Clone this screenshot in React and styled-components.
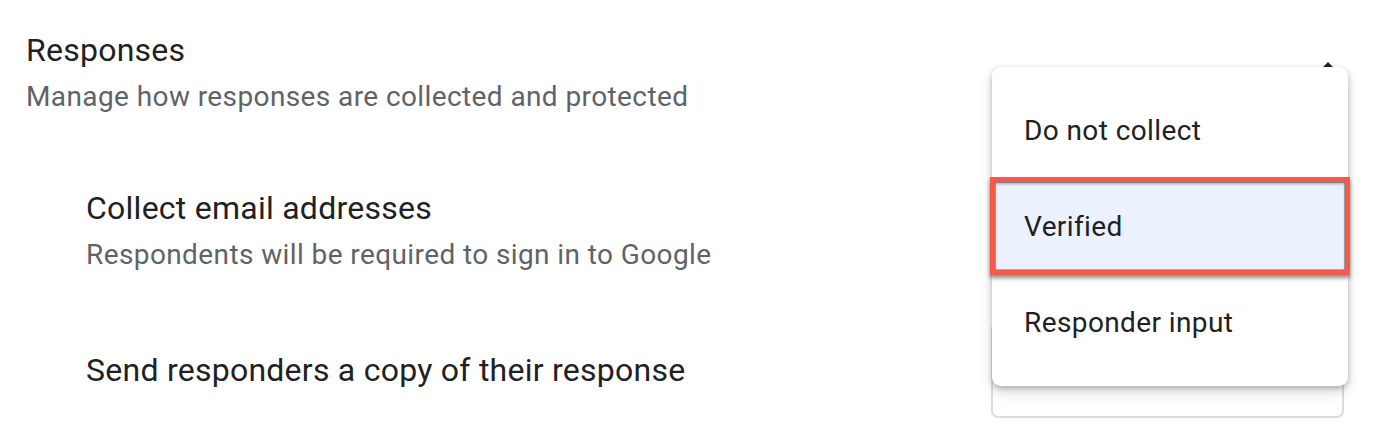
import React from "react";
import styled, { createGlobalStyle } from "styled-components";

const Global = createGlobalStyle`
  html, body { margin: 0; padding: 0; background: #fff; }
  body { font-family: Roboto, "Noto Sans", Arial, sans-serif; color: #202124; }
  * { box-sizing: border-box; }
`;

const Page = styled.div`
  width: 1374px;
  height: 440px;
  overflow: hidden;
  padding: 30px 30px 0 26px;
  display: flex;
  flex-direction: column;
`;

const Header = styled.div`
  display: flex;
  justify-content: space-between;
  align-items: flex-start;
`;

const TitleBlock = styled.div`
  display: flex;
  flex-direction: column;
  gap: 7px;
`;

const Title = styled.div`
  font-size: 32px;
  line-height: 40px;
  letter-spacing: 0.25px;
  color: #202124;
`;

const Subtitle = styled.div`
  font-size: 28px;
  line-height: 40px;
  letter-spacing: 0.4px;
  color: #5f6368;
`;

const Chevron = styled.svg`
  width: 48px;
  height: 48px;
  margin-top: 16px;
  margin-right: -8px;
  fill: #202124;
`;

const Rows = styled.div`
  margin-top: 66px;
  padding-left: 60px;
  display: flex;
  flex-direction: column;
  gap: 43px;
`;

const Row = styled.div`
  display: flex;
  justify-content: space-between;
  align-items: center;
`;

const RowText = styled.div`
  display: flex;
  flex-direction: column;
  gap: 7px;
`;

const SelectWrap = styled.div`
  position: relative;
  width: 353px;
  height: 96px;
`;

const SelectBox = styled.div`
  width: 100%;
  height: 100%;
  border: 2px solid #dadce0;
  border-radius: 7px;
`;

const Menu = styled.div`
  position: absolute;
  left: 1px;
  top: -116px;
  width: 356px;
  background: #fff;
  border-radius: 9px;
  padding: 15px 0 16px;
  box-shadow: 0 6px 12px rgba(60, 64, 67, 0.22), 0 2px 5px rgba(60, 64, 67, 0.28);
  z-index: 10;
`;

const Item = styled.div`
  position: relative;
  height: 96px;
  display: flex;
  align-items: center;
  padding-left: 32px;
  font-size: 28px;
  letter-spacing: 0.4px;
  color: #202124;
  background: ${(p) => (p.$active ? "#ebf2fd" : "transparent")};

  ${(p) =>
    p.$active &&
    `
    &::after {
      content: "";
      position: absolute;
      top: -1px;
      bottom: -1px;
      left: -2px;
      right: -2px;
      border: 5px solid #f6584a;
      box-shadow:
        inset 0 0 0 1px rgba(0, 0, 0, 0.28),
        inset 0 2px 3px rgba(0, 0, 0, 0.3),
        0 3px 4px rgba(0, 0, 0, 0.45);
    }
  `}
`;

const options = ["Do not collect", "Verified", "Responder input"];

export default function App() {
  return (
    <>
      <Global />
      <Page>
        <Header>
          <TitleBlock>
            <Title>Responses</Title>
            <Subtitle>Manage how responses are collected and protected</Subtitle>
          </TitleBlock>
          <Chevron viewBox="0 0 24 24">
            <path d="M12 8l-6 6 1.41 1.41L12 10.83l4.59 4.58L18 14z" />
          </Chevron>
        </Header>
        <Rows>
          <Row>
            <RowText>
              <Title>Collect email addresses</Title>
              <Subtitle>Respondents will be required to sign in to Google</Subtitle>
            </RowText>
            <SelectWrap>
              <SelectBox aria-label="Collect email addresses: Verified" />
              <Menu>
                {options.map((o) => (
                  <Item key={o} $active={o === "Verified"}>
                    {o}
                  </Item>
                ))}
              </Menu>
            </SelectWrap>
          </Row>
          <Row>
            <RowText>
              <Title>Send responders a copy of their response</Title>
            </RowText>
            <SelectWrap>
              <SelectBox aria-label="Send responders a copy" />
            </SelectWrap>
          </Row>
        </Rows>
      </Page>
    </>
  );
}
